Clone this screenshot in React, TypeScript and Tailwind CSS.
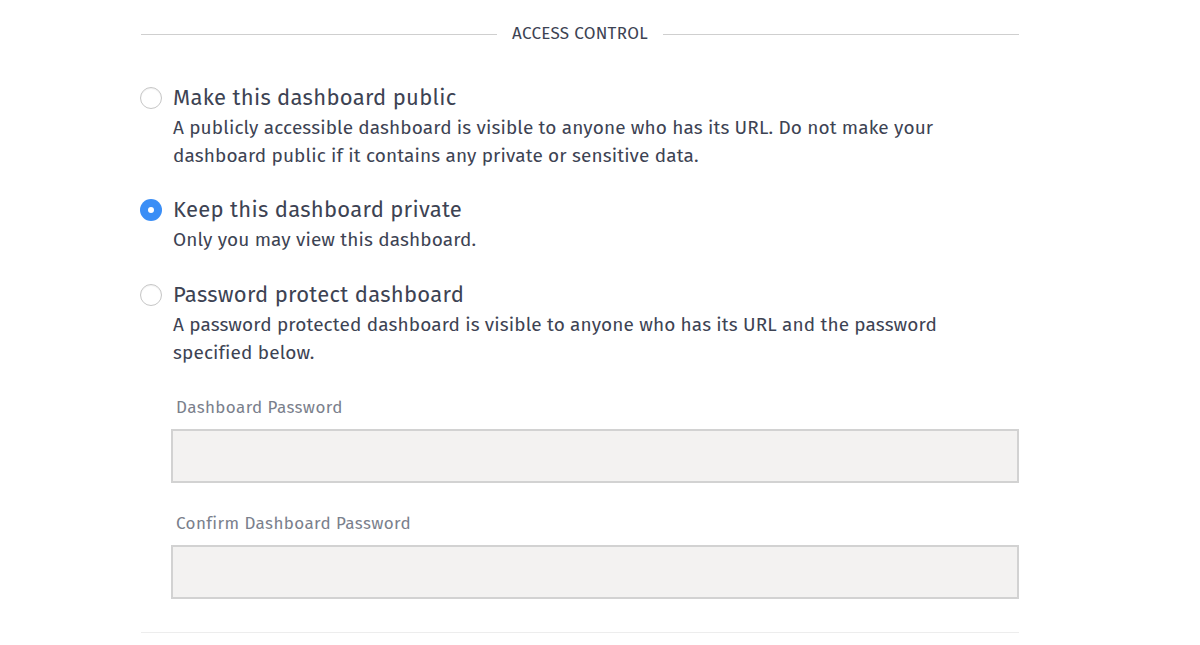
import React from "react";

const font = { fontFamily: '"Fira Sans", "Noto Sans", "Open Sans", sans-serif' };

function Radio({ checked }: { checked?: boolean }) {
  if (checked) {
    return (
      <span className="mt-[5px] flex h-[22px] w-[22px] shrink-0 items-center justify-center rounded-full bg-[#3a8ef6]">
        <span className="h-[6px] w-[6px] rounded-full bg-white" />
      </span>
    );
  }
  return (
    <span className="mt-[5px] h-[22px] w-[22px] shrink-0 rounded-full border border-[#c6c6c6] bg-white shadow-[inset_0_1px_1px_rgba(0,0,0,0.06)]" />
  );
}

function Option({ checked, title, desc, className = "" }: { checked?: boolean; title: string; desc: string; className?: string }) {
  return (
    <div className={"flex gap-[11px] " + className}>
      <Radio checked={checked} />
      <div className="flex-1">
        <div className="text-[22px] leading-[32px] tracking-[0.3px] text-[#3d4353]">{title}</div>
        <div className="text-[19px] leading-[28px] tracking-[0.13px] text-[#3d4353]">{desc}</div>
      </div>
    </div>
  );
}

function Field({ label }: { label: string }) {
  return (
    <div className="ml-[30px]">
      <div className="pl-[5px] text-[17px] leading-[24px] tracking-[0.4px] text-[#7a808c]">{label}</div>
      <div className="mt-[9px] h-[54px] border-2 border-[#d2d2d2] bg-[#f3f2f1]" />
    </div>
  );
}

export default function App() {
  return (
    <div className="min-h-[645px] w-[1200px] bg-white" style={font}>
      <div className="ml-[141px] w-[878px] pt-[22px]">
        <div className="flex items-center gap-[15px]">
          <div className="h-px flex-1 bg-[#cfcfcf]" />
          <div className="text-[17px] leading-[24px] tracking-[0.3px] text-[#3d4353]">ACCESS CONTROL</div>
          <div className="h-px flex-1 bg-[#cfcfcf]" />
        </div>
        <div className="-ml-px mt-[36px] flex flex-col gap-[24px]">
          <Option
            title="Make this dashboard public"
            desc="A publicly accessible dashboard is visible to anyone who has its URL. Do not make your dashboard public if it contains any private or sensitive data."
          />
          <Option checked title="Keep this dashboard private" desc="Only you may view this dashboard." />
          <Option
            className="mt-[1px]"
            title="Password protect dashboard"
            desc="A password protected dashboard is visible to anyone who has its URL and the password specified below."
          />
        </div>
        <div className="mt-[29px] flex flex-col gap-[29px]">
          <Field label="Dashboard Password" />
          <Field label="Confirm Dashboard Password" />
        </div>
        <div className="mt-[33px] h-px bg-[#ededed]" />
      </div>
    </div>
  );
}
